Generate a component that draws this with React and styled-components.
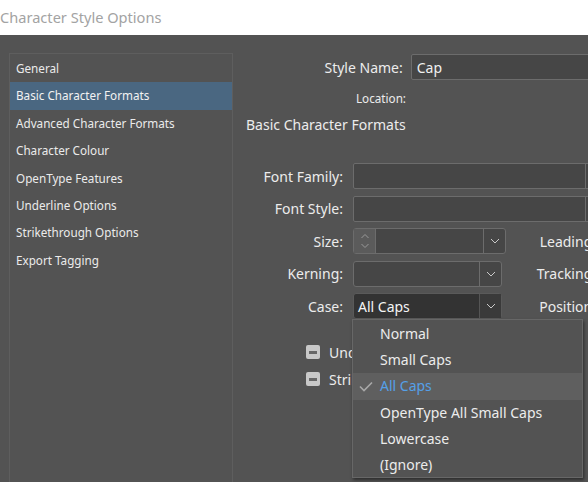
import React from "react";
import styled, { createGlobalStyle } from "styled-components";

const Global = createGlobalStyle`
  html, body { margin: 0; padding: 0; background: #535353; }
  body { font-family: "Noto Sans", "Open Sans", sans-serif; }
`;

const Window = styled.div`
  width: 588px;
  height: 482px;
  overflow: hidden;
  background: #535353;
  display: flex;
  flex-direction: column;
`;

const TitleBar = styled.div`
  height: 35px;
  flex: none;
  background: #ffffff;
  color: #a3a3a3;
  font-size: 14.6px;
  line-height: 34px;
  padding-left: 0;
  white-space: nowrap;
`;

const Body = styled.div`
  flex: 1;
  display: flex;
  padding: 18px 0 0 9px;
  min-height: 0;
`;

const Sidebar = styled.div`
  width: 222px;
  flex: none;
  border: 1px solid #5e5e5e;
  border-bottom: none;
  padding-top: 1px;
`;

const NavItem = styled.div`
  height: 27.4px;
  line-height: 27.4px;
  padding-left: 6px;
  font-size: 11.7px;
  color: ${(p) => (p.$active ? "#f2f2f2" : "#ebebeb")};
  background: ${(p) => (p.$active ? "#4a6781" : "transparent")};
  white-space: nowrap;
`;

const Main = styled.div`
  flex: none;
  width: 400px;
  margin-left: 13px;
  color: #ececec;
  font-size: 14px;
`;

const TopRow = styled.div`
  display: flex;
  align-items: center;
  margin-top: 1px;
  height: 26px;
`;

const TopLabel = styled.div`
  width: 160px;
  text-align: right;
  font-size: ${(p) => p.$size || "14px"};
  white-space: nowrap;
`;

const TextBox = styled.div`
  box-sizing: border-box;
  height: 26px;
  width: ${(p) => p.$w}px;
  margin-left: ${(p) => p.$ml || 0}px;
  background: #464646;
  border: 1px solid #6c6c6c;
  border-radius: 2px;
  display: flex;
  align-items: center;
  padding-left: 5px;
  color: #f0f0f0;
  font-size: 14px;
  white-space: nowrap;
`;

const LocationRow = styled.div`
  display: flex;
  align-items: center;
  height: 20px;
  margin-top: 8px;
`;

const SectionTitle = styled.div`
  margin-top: 7px;
  height: 20px;
  line-height: 20px;
  font-size: 14px;
  white-space: nowrap;
`;

const Form = styled.div`
  margin-top: 28px;
  display: grid;
  grid-template-columns: 97px 152px 81px;
  column-gap: 10px;
  row-gap: 6.5px;
  grid-auto-rows: 26px;
  align-items: center;
`;

const FieldLabel = styled.div`
  text-align: right;
  white-space: nowrap;
`;

const SideLabel = styled.div`
  text-align: right;
  white-space: nowrap;
`;

const WideBox = styled.div`
  grid-column: 2 / span 2;
  box-sizing: border-box;
  height: 26px;
  width: 260px;
  background: #464646;
  border: 1px solid #6c6c6c;
  border-radius: 2px;
  display: flex;
  justify-content: flex-end;
`;

const WideEnd = styled.div`
  width: 1px;
  margin-right: 26px;
  background: #6c6c6c;
`;

const Combo = styled.div`
  position: relative;
  box-sizing: border-box;
  height: 26px;
  width: ${(p) => p.$w}px;
  display: flex;
  border: 1px solid ${(p) => (p.$dark ? "#5a5a5a" : "#6c6c6c")};
  border-radius: 3px;
  background: ${(p) => (p.$dark ? "#333333" : "#464646")};
`;

const Spinner = styled.div`
  width: 21px;
  flex: none;
  background: #5b5b5b;
  border-right: 1px solid #6c6c6c;
  display: flex;
  align-items: center;
  justify-content: center;
`;

const ComboText = styled.div`
  flex: 1;
  display: flex;
  align-items: center;
  padding-left: 4px;
  color: #f5f5f5;
  font-size: 14px;
  white-space: nowrap;
`;

const ComboButton = styled.div`
  width: 21px;
  flex: none;
  border-left: 1px solid ${(p) => (p.$dark ? "#555555" : "#6c6c6c")};
  background: ${(p) => (p.$dark ? "#3a3a3a" : "transparent")};
  display: flex;
  align-items: center;
  justify-content: center;
`;

const Menu = styled.div`
  position: absolute;
  left: -2px;
  top: 25px;
  width: 231px;
  box-sizing: border-box;
  height: 159px;
  background: #535353;
  border: 1px solid #676767;
  box-shadow: 1px 2px 3px rgba(0, 0, 0, 0.45);
  padding-top: 1px;
  z-index: 5;
`;

const MenuItem = styled.div`
  position: relative;
  height: 26.2px;
  line-height: 26.2px;
  padding-left: 27px;
  font-size: 14px;
  color: ${(p) => (p.$selected ? "#55a0e8" : "#ececec")};
  background: ${(p) => (p.$selected ? "#5f5f5f" : "transparent")};
  white-space: nowrap;
`;

const Check = styled.svg`
  position: absolute;
  left: 6px;
  top: 8px;
`;

const Checks = styled.div`
  margin-top: 26px;
  margin-left: 60px;
  display: flex;
  flex-direction: column;
  gap: 13px;
`;

const CheckRow = styled.div`
  display: flex;
  align-items: center;
  gap: 9px;
  height: 14px;
  white-space: nowrap;
`;

const Box = styled.div`
  width: 14px;
  height: 14px;
  border-radius: 2px;
  background: #c8c8c8;
  display: flex;
  align-items: center;
  justify-content: center;
  &::after {
    content: "";
    width: 8px;
    height: 3px;
    background: #676767;
  }
`;

const Chevron = () => (
  <svg width="10" height="6" viewBox="0 0 10 6">
    <path d="M1 1 L5 5 L9 1" fill="none" stroke="#c9c9c9" strokeWidth="1" />
  </svg>
);

const SpinIcon = () => (
  <svg width="10" height="18" viewBox="0 0 10 18">
    <path d="M1.5 6 L5 2.5 L8.5 6" fill="none" stroke="#9a9a9a" strokeWidth="1" />
    <path d="M1.5 12 L5 15.5 L8.5 12" fill="none" stroke="#9a9a9a" strokeWidth="1" />
  </svg>
);

const navItems = [
  "General",
  "Basic Character Formats",
  "Advanced Character Formats",
  "Character Colour",
  "OpenType Features",
  "Underline Options",
  "Strikethrough Options",
  "Export Tagging",
];

const caseOptions = [
  "Normal",
  "Small Caps",
  "All Caps",
  "OpenType All Small Caps",
  "Lowercase",
  "(Ignore)",
];

export default function App() {
  return (
    <Window>
      <Global />
      <TitleBar>Character Style Options</TitleBar>
      <Body>
        <Sidebar>
          {navItems.map((n) => (
            <NavItem key={n} $active={n === "Basic Character Formats"}>
              {n}
            </NavItem>
          ))}
        </Sidebar>
        <Main>
          <TopRow>
            <TopLabel>Style Name:</TopLabel>
            <TextBox $w={240} $ml={8}>Cap</TextBox>
          </TopRow>
          <LocationRow>
            <TopLabel $size="11.7px">Location:</TopLabel>
          </LocationRow>
          <SectionTitle>Basic Character Formats</SectionTitle>
          <Form>
            <FieldLabel>Font Family:</FieldLabel>
            <WideBox>
              <WideEnd />
            </WideBox>
            <FieldLabel>Font Style:</FieldLabel>
            <WideBox>
              <WideEnd />
            </WideBox>
            <FieldLabel>Size:</FieldLabel>
            <Combo $w={153}>
              <Spinner>
                <SpinIcon />
              </Spinner>
              <ComboText />
              <ComboButton>
                <Chevron />
              </ComboButton>
            </Combo>
            <SideLabel>Leading:</SideLabel>
            <FieldLabel>Kerning:</FieldLabel>
            <Combo $w={149}>
              <ComboText />
              <ComboButton>
                <Chevron />
              </ComboButton>
            </Combo>
            <SideLabel>Tracking:</SideLabel>
            <FieldLabel>Case:</FieldLabel>
            <Combo $w={149} $dark>
              <ComboText>All Caps</ComboText>
              <ComboButton $dark>
                <Chevron />
              </ComboButton>
              <Menu>
                {caseOptions.map((o) => (
                  <MenuItem key={o} $selected={o === "All Caps"}>
                    {o === "All Caps" && (
                      <Check width="14" height="11" viewBox="0 0 14 11">
                        <path
                          d="M1 5.5 L5 9.5 L13 1.5"
                          fill="none"
                          stroke="#a8a8a8"
                          strokeWidth="1.6"
                        />
                      </Check>
                    )}
                    {o}
                  </MenuItem>
                ))}
              </Menu>
            </Combo>
            <SideLabel>Position:</SideLabel>
          </Form>
          <Checks>
            <CheckRow>
              <Box />
              Underline
            </CheckRow>
            <CheckRow>
              <Box />
              Strikethrough
            </CheckRow>
          </Checks>
        </Main>
      </Body>
    </Window>
  );
}
